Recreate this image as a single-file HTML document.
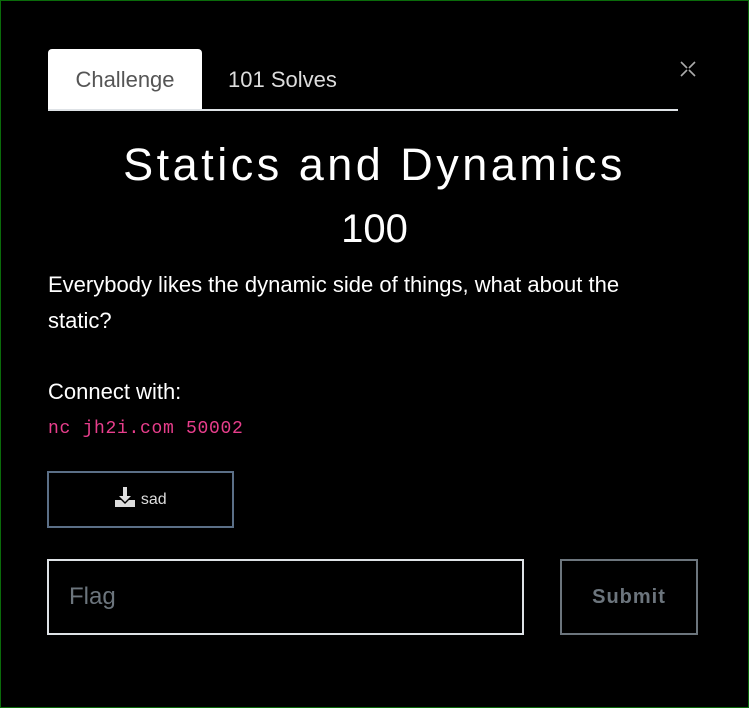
<!DOCTYPE html>
<html><head><style>
html,body{margin:0;padding:0;background:#000;}
body{width:747px;height:706px;border:1px solid #0a6b0a;position:relative;overflow:hidden;font-family:"Liberation Sans",sans-serif;color:#fff;}
.abs{position:absolute;}
.tab{left:47px;top:48px;width:154px;height:62px;background:#fff;border-radius:4px 4px 0 0;color:#555;font-size:22px;line-height:62px;text-align:center;}
.tab2{left:227px;top:48px;height:62px;line-height:62px;font-size:22px;color:#ddd;}
.line{left:47px;top:108px;width:630px;height:2px;background:#dee2e6;}
.title{left:0;width:747px;top:136px;text-align:center;font-size:45px;letter-spacing:3.5px;font-weight:300;line-height:56px;}
.val{left:0;width:747px;top:205px;text-align:center;font-size:40px;line-height:46px;}
.desc{left:47px;top:266px;width:625px;font-size:22px;line-height:36px;}
code{font-family:"Liberation Mono",monospace;color:#e83e8c;font-size:18px;letter-spacing:0.7px;}
</style></head><body>
<div class="abs tab">Challenge</div>
<div class="abs tab2">101 Solves</div>
<div class="abs line"></div>
<svg class="abs" style="left:678px;top:59px" width="18" height="18"><path d="M2 2L8 8M16 2L10 8M2 16L8 10M16 16L10 10" stroke="#aaa" stroke-width="1.6"/></svg>
<div class="abs title">Statics and Dynamics</div>
<div class="abs val">100</div>
<div class="abs desc">Everybody likes the dynamic side of things, what about the static?</div>
<div class="abs" style="left:47px;top:374px;font-size:22px;line-height:34px">Connect with:</div>
<div class="abs" style="left:47px;top:418px"><code>nc jh2i.com 50002</code></div>
<div class="abs" style="left:46px;top:470px;width:183px;height:53px;border:2px solid #5b6f87;text-align:center;line-height:53px;font-size:16px;color:#ddd">
<svg width="22" height="22" viewBox="0 0 22 22" style="vertical-align:-4px"><path d="M9 1h4v9h4l-6 6-6-6h4z" fill="#ddd"/><path d="M1 14h6l4 4 4-4h6v7H1z" fill="#ddd"/></svg> sad</div>
<div class="abs" style="left:46px;top:558px;width:473px;height:72px;border:2px solid #dee2e6;font-size:24px;color:#6c757d;line-height:72px;text-indent:20px">Flag</div>
<div class="abs" style="left:559px;top:558px;width:134px;height:72px;border:2px solid #6c757d;font-size:20px;font-weight:bold;color:#6c757d;line-height:72px;text-align:center;letter-spacing:1px">Submit</div>
</body></html>
